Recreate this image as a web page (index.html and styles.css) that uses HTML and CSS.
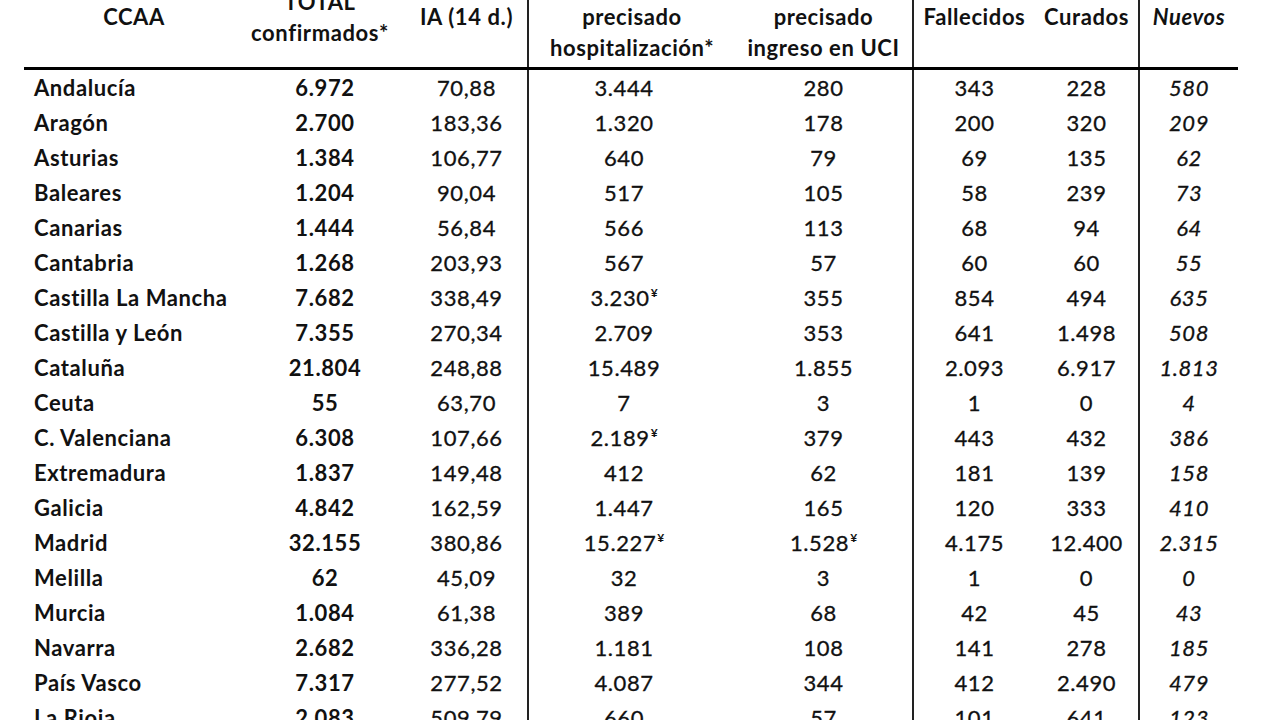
FILE: index.html
```html
<!DOCTYPE html>
<html lang="es">
<head>
<meta charset="utf-8">
<title>Situación COVID-19 por CCAA</title>
<link rel="stylesheet" href="styles.css">
</head>
<body>
<table class="covid">
  <colgroup>
    <col class="c-ccaa"><col class="c-total"><col class="c-ia"><col class="c-hosp"><col class="c-uci"><col class="c-fall"><col class="c-cur"><col class="c-new">
  </colgroup>
  <thead>
    <tr>
      <th class="name-h">CCAA</th>
      <th class="total-h">TOTAL<br>confirmados*</th>
      <th class="sep">IA (14 d.)</th>
      <th>Casos que han<br>precisado<br>hospitalización*</th>
      <th class="sep">Casos que han<br>precisado<br>ingreso en UCI</th>
      <th class="top">Fallecidos</th>
      <th class="top sep">Curados</th>
      <th class="top new">Nuevos</th>
    </tr>
  </thead>
  <tbody>
    <tr><td class="name">Andalucía</td><td class="total">6.972</td><td class="sep">70,88</td><td class="hosp">3.444</td><td class="sep">280</td><td>343</td><td class="sep">228</td><td class="new">580</td></tr>
    <tr><td class="name">Aragón</td><td class="total">2.700</td><td class="sep">183,36</td><td class="hosp">1.320</td><td class="sep">178</td><td>200</td><td class="sep">320</td><td class="new">209</td></tr>
    <tr><td class="name">Asturias</td><td class="total">1.384</td><td class="sep">106,77</td><td class="hosp">640</td><td class="sep">79</td><td>69</td><td class="sep">135</td><td class="new">62</td></tr>
    <tr><td class="name">Baleares</td><td class="total">1.204</td><td class="sep">90,04</td><td class="hosp">517</td><td class="sep">105</td><td>58</td><td class="sep">239</td><td class="new">73</td></tr>
    <tr><td class="name">Canarias</td><td class="total">1.444</td><td class="sep">56,84</td><td class="hosp">566</td><td class="sep">113</td><td>68</td><td class="sep">94</td><td class="new">64</td></tr>
    <tr><td class="name">Cantabria</td><td class="total">1.268</td><td class="sep">203,93</td><td class="hosp">567</td><td class="sep">57</td><td>60</td><td class="sep">60</td><td class="new">55</td></tr>
    <tr><td class="name">Castilla La Mancha</td><td class="total">7.682</td><td class="sep">338,49</td><td class="hosp">3.230<sup class="mark">¥</sup></td><td class="sep">355</td><td>854</td><td class="sep">494</td><td class="new">635</td></tr>
    <tr><td class="name">Castilla y León</td><td class="total">7.355</td><td class="sep">270,34</td><td class="hosp">2.709</td><td class="sep">353</td><td>641</td><td class="sep">1.498</td><td class="new">508</td></tr>
    <tr><td class="name">Cataluña</td><td class="total">21.804</td><td class="sep">248,88</td><td class="hosp">15.489</td><td class="sep">1.855</td><td>2.093</td><td class="sep">6.917</td><td class="new">1.813</td></tr>
    <tr><td class="name">Ceuta</td><td class="total">55</td><td class="sep">63,70</td><td class="hosp">7</td><td class="sep">3</td><td>1</td><td class="sep">0</td><td class="new">4</td></tr>
    <tr><td class="name">C. Valenciana</td><td class="total">6.308</td><td class="sep">107,66</td><td class="hosp">2.189<sup class="mark">¥</sup></td><td class="sep">379</td><td>443</td><td class="sep">432</td><td class="new">386</td></tr>
    <tr><td class="name">Extremadura</td><td class="total">1.837</td><td class="sep">149,48</td><td class="hosp">412</td><td class="sep">62</td><td>181</td><td class="sep">139</td><td class="new">158</td></tr>
    <tr><td class="name">Galicia</td><td class="total">4.842</td><td class="sep">162,59</td><td class="hosp">1.447</td><td class="sep">165</td><td>120</td><td class="sep">333</td><td class="new">410</td></tr>
    <tr><td class="name">Madrid</td><td class="total">32.155</td><td class="sep">380,86</td><td class="hosp">15.227<sup class="mark">¥</sup></td><td class="sep">1.528<sup class="mark">¥</sup></td><td>4.175</td><td class="sep">12.400</td><td class="new">2.315</td></tr>
    <tr><td class="name">Melilla</td><td class="total">62</td><td class="sep">45,09</td><td class="hosp">32</td><td class="sep">3</td><td>1</td><td class="sep">0</td><td class="new">0</td></tr>
    <tr><td class="name">Murcia</td><td class="total">1.084</td><td class="sep">61,38</td><td class="hosp">389</td><td class="sep">68</td><td>42</td><td class="sep">45</td><td class="new">43</td></tr>
    <tr><td class="name">Navarra</td><td class="total">2.682</td><td class="sep">336,28</td><td class="hosp">1.181</td><td class="sep">108</td><td>141</td><td class="sep">278</td><td class="new">185</td></tr>
    <tr><td class="name">País Vasco</td><td class="total">7.317</td><td class="sep">277,52</td><td class="hosp">4.087</td><td class="sep">344</td><td>412</td><td class="sep">2.490</td><td class="new">479</td></tr>
    <tr><td class="name">La Rioja</td><td class="total">2.083</td><td class="sep">509,79</td><td class="hosp">660</td><td class="sep">57</td><td>101</td><td class="sep">641</td><td class="new">123</td></tr>
  </tbody>
</table>
</body>
</html>
```

FILE: styles.css
```css
html, body {
  margin: 0;
  padding: 0;
  background: #ffffff;
  overflow: hidden;
}

body {
  width: 1280px;
  height: 720px;
  font-family: Lato, "Open Sans", sans-serif;
  color: #111111;
}

.covid {
  margin: -30px 0 0 24px;
  border-collapse: collapse;
  table-layout: fixed;
  width: 1214px;
  font-size: 22px;
  letter-spacing: 0.6px;
}

.c-ccaa { width: 220px; }
.c-total { width: 162px; }
.c-ia { width: 122px; }
.c-hosp { width: 207px; }
.c-uci { width: 178px; }
.c-fall { width: 122px; }
.c-cur { width: 104px; }
.c-new { width: 99px; }

.covid th {
  font-weight: 700;
  line-height: 31px;
  padding: 0 0 4px 0;
  text-align: center;
  vertical-align: middle;
  border-bottom: 3px solid #000000;
  white-space: nowrap;
}

.covid th.total-h { padding-right: 10px; }

.covid th.new {
  font-style: italic;
}

.covid td {
  height: 35px;
  padding: 0;
  line-height: 35px;
  text-align: center;
  vertical-align: middle;
  white-space: nowrap;
  -webkit-text-stroke: 0.3px #111111;
}

.covid .sep {
  border-right: 2px solid #222222;
}

.covid td.name {
  text-align: left;
  padding-left: 10px;
  font-weight: 700;
  -webkit-text-stroke: 0;
}

.covid td.total {
  font-weight: 700;
  -webkit-text-stroke: 0;
}

.covid td.hosp {
  padding-right: 16px;
}

.covid td.new {
  font-style: italic;
}

.mark {
  font-size: 12px;
  font-weight: 700;
  line-height: 0;
  letter-spacing: 0;
  vertical-align: 9px;
  margin-left: 1px;
  -webkit-text-stroke: 0;
}
```
